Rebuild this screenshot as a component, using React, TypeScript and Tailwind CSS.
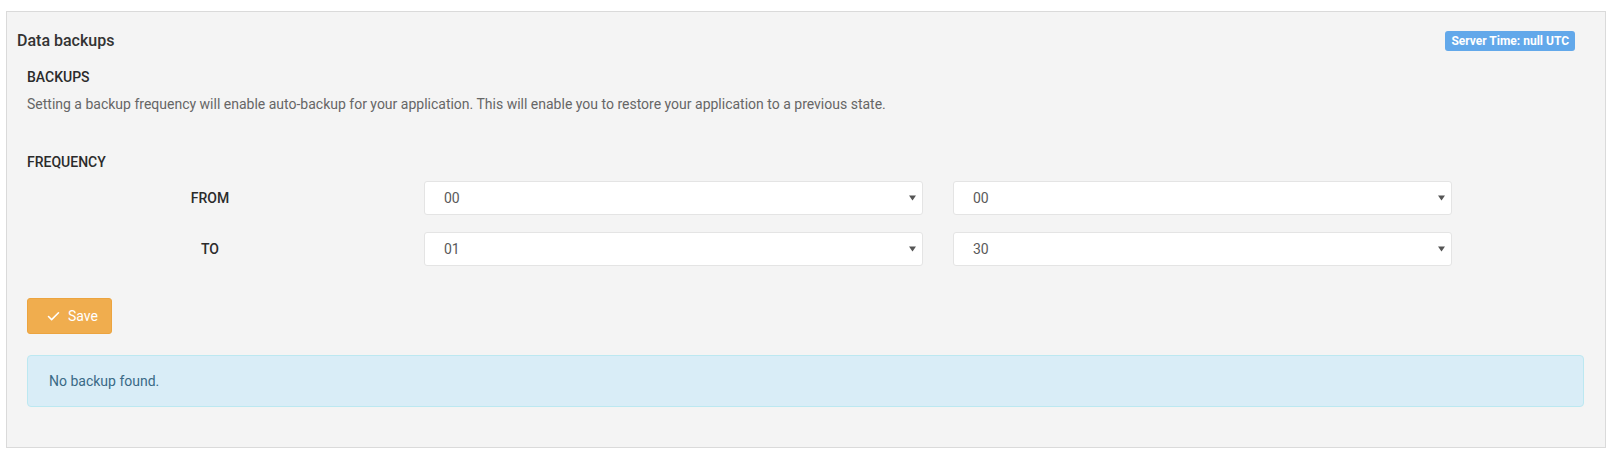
import { Check } from "lucide-react";

const rows = [
  { label: "FROM", hour: "00", minute: "00" },
  { label: "TO", hour: "01", minute: "30" },
];

function Select({ value }: { value: string }) {
  return (
    <div className="w-[499px] h-[34px] flex items-center justify-between bg-white border border-[#e4e4e4] rounded-[3px] pl-[19px] pr-[6px] text-[14px] text-[#5a5a5a]">
      <span>{value}</span>
      <svg width="7" height="6" viewBox="0 0 7 6" className="text-[#555]">
        <path d="M0 0.5h7L3.5 5.5z" fill="currentColor" />
      </svg>
    </div>
  );
}

export default function App() {
  return (
    <main className="bg-white h-[462px] pt-[11px] font-['Roboto',sans-serif]">
      <section className="ml-[6px] w-[1600px] border border-[#dadada] bg-[#f4f4f4]">
        {/* Header */}
        <div className="flex items-center justify-between pl-[10px] pr-[30px] pt-[19px]">
          <h2 className="text-[16px] leading-[20px] font-medium text-[#333]">
            Data backups
          </h2>
          <span className="h-[20px] px-[6px] flex items-center rounded-[3px] bg-[#62a8ea] text-white text-[12px] font-bold">
            Server Time: null UTC
          </span>
        </div>

        <div className="pl-[20px] pr-[21px] pb-[40px]">
          <h3 className="mt-[16px] text-[14px] leading-[20px] font-medium text-[#2b2b2b]">
            BACKUPS
          </h3>
          <p className="mt-[7px] text-[14px] leading-[20px] text-[#666]">
            Setting a backup frequency will enable auto-backup for your
            application. This will enable you to restore your application to a
            previous state.
          </p>

          <h3 className="mt-[38px] text-[14px] leading-[20px] font-medium text-[#2b2b2b]">
            FREQUENCY
          </h3>

          <div className="mt-[9px] flex flex-col gap-[17px]">
            {rows.map((row) => (
              <div key={row.label} className="flex items-center">
                <div className="w-[366px] text-center text-[14px] font-medium text-[#2b2b2b]">
                  {row.label}
                </div>
                <div className="ml-[31px]">
                  <Select value={row.hour} />
                </div>
                <div className="ml-[30px]">
                  <Select value={row.minute} />
                </div>
              </div>
            ))}
          </div>

          <button className="mt-[32px] w-[85px] h-[36px] flex items-center pl-[18px] gap-[7px] bg-[#f0ad4e] border border-[#eca43f] rounded-[3px] text-white text-[14px]">
            <Check size={15} strokeWidth={2.5} />
            Save
          </button>

          <div className="mt-[21px] h-[52px] flex items-center pl-[21px] bg-[#d9edf7] border border-[#bce8f1] rounded-[4px] text-[14px] text-[#3a6a86]">
            No backup found.
          </div>
        </div>
      </section>
    </main>
  );
}
